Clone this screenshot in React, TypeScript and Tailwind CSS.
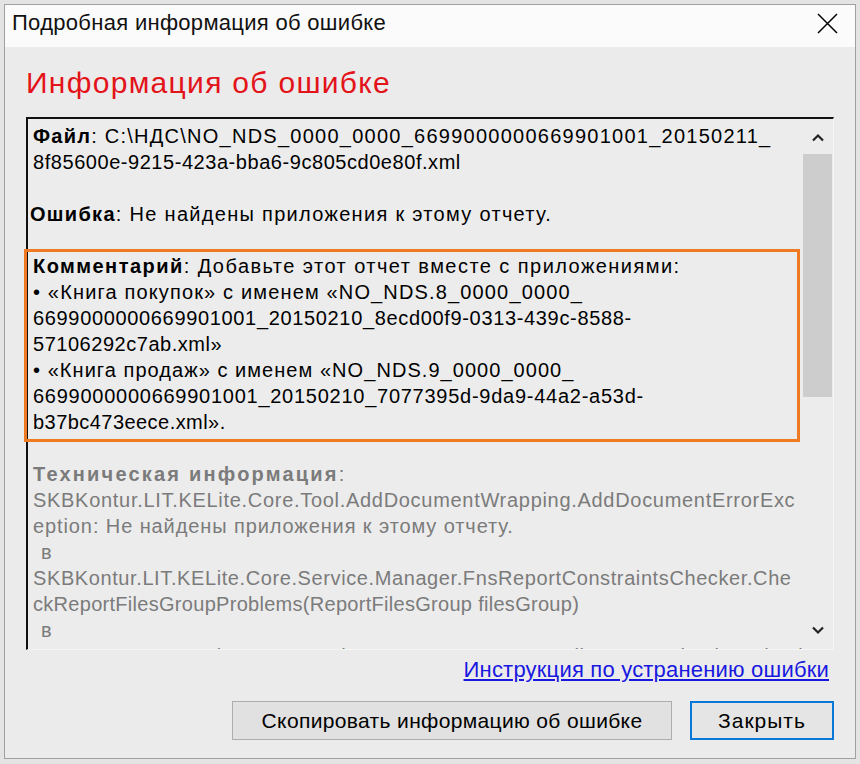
import React from 'react';

const sans = { fontFamily: '"Liberation Sans", Arial, sans-serif' };

const Line: React.FC<{ children?: React.ReactNode; className?: string }> = ({ children, className = '' }) => (
  <div className={`h-[26px] whitespace-nowrap ${className}`}>{children ?? '\u00a0'}</div>
);

const App: React.FC = () => {
  return (
    <div className="w-[860px] h-[764px] bg-[#e4e4e4] pt-[4px] pl-[4px] overflow-hidden" style={sans}>
      {/* window */}
      <div className="w-[852px] h-[755px] border border-[#a0a0a0] bg-[#ebebeb] flex flex-col">
        {/* title bar */}
        <div className="h-[42px] bg-[#fbfbfb] flex items-center justify-between pl-[7px] pr-[17px] pb-[6px]">
          <span className="text-[22px] tracking-[0.3px] text-[#111] leading-none">Подробная информация об ошибке</span>
          <svg width="21" height="21" viewBox="0 0 21 21" className="text-black">
            <path d="M1 1 L20 20 M20 1 L1 20" stroke="currentColor" strokeWidth="1.5" fill="none" />
          </svg>
        </div>

        <div className="flex flex-col px-[21px]">
          <h1 className="mt-[18px] h-[36px] leading-[36px] text-[30px] tracking-[1.3px] text-[#e3131a] whitespace-nowrap">
            Информация об ошибке
          </h1>

          {/* text box */}
          <div className="relative mt-[16px] h-[533px] border-t-2 border-l-2 border-t-[#111] border-l-[#111] border-b border-r border-b-[#f4f4f4] border-r-[#f4f4f4] bg-[#ececec] flex">
            <div className="flex-1 overflow-hidden pt-[4px] pl-[5px] text-[20px] leading-[26px] text-black">
              <Line className="tracking-[1.25px]"><b>Файл</b>: C:\НДС\NO_NDS_0000_0000_6699000000669901001_20150211_</Line>
              <Line className="tracking-[0.55px]">8f85600e-9215-423a-bba6-9c805cd0e80f.xml</Line>
              <Line />
              <Line className="-ml-[3px] tracking-[1.3px]"><b>Ошибка</b>: Не найдены приложения к этому отчету.</Line>
              <Line />
              <Line className="tracking-[1.45px]"><b>Комментарий</b>: Добавьте этот отчет вместе с приложениями:</Line>
              <Line className="tracking-[1.15px]">• «Книга покупок» с именем «NO_NDS.8_0000_0000_</Line>
              <Line className="tracking-[0.66px]">6699000000669901001_20150210_8ecd00f9-0313-439c-8588-</Line>
              <Line className="tracking-[0.53px]">57106292c7ab.xml»</Line>
              <Line className="tracking-[1.05px]">• «Книга продаж» с именем «NO_NDS.9_0000_0000_</Line>
              <Line className="tracking-[0.74px]">6699000000669901001_20150210_7077395d-9da9-44a2-a53d-</Line>
              <Line className="tracking-[0.45px]">b37bc473eece.xml».</Line>
              <Line />
              <div className="text-[#7b7b7b]">
                <Line className="tracking-[2.2px]"><b>Техническая информация</b>:</Line>
                <Line className="tracking-[0.7px]">SKBKontur.LIT.KELite.Core.Tool.AddDocumentWrapping.AddDocumentErrorExc</Line>
                <Line className="tracking-[0.9px]">eption: Не найдены приложения к этому отчету.</Line>
                <Line className="pl-[8px]">в</Line>
                <Line className="tracking-[0.6px]">SKBKontur.LIT.KELite.Core.Service.Manager.FnsReportConstraintsChecker.Che</Line>
                <Line className="tracking-[0.29px]">ckReportFilesGroupProblems(ReportFilesGroup filesGroup)</Line>
                <Line className="pl-[8px]">в</Line>
                <Line className="tracking-[0.6px]">SKBKontur.LIT.KELite.Core.Service.Manager.FnsReportFilesGroupChecker.Check</Line>
              </div>
            </div>

            {/* scrollbar */}
            <div className="w-[31px] flex flex-col items-center pt-[14px]">
              <svg width="14" height="9" viewBox="0 0 14 9">
                <path d="M2 7.5 L7 2.5 L12 7.5" stroke="#222" strokeWidth="2.2" fill="none" />
              </svg>
              <div className="mt-[12px] w-[29px] h-[243px] bg-[#cdcdcd]" />
              <div className="flex-1" />
              <svg width="14" height="9" viewBox="0 0 14 9" className="mb-[14px]">
                <path d="M2 1.5 L7 6.5 L12 1.5" stroke="#222" strokeWidth="2.2" fill="none" />
              </svg>
            </div>

            {/* highlight frame */}
            <div className="absolute left-[-4px] top-[130px] w-[776px] h-[193px] border-[3px] border-[#f07a22] pointer-events-none" />
          </div>

          <div className="mt-[8px] h-[24px] flex justify-end pr-[5px]">
            <a href="#" className="text-[22px] tracking-[0.2px] leading-[24px] text-[#1818e0] underline underline-offset-2 whitespace-nowrap">
              Инструкция по устранению ошибки
            </a>
          </div>

          <div className="mt-[19px] flex justify-end gap-[18px]">
            <button className="w-[440px] h-[39px] border border-[#adadad] bg-[#e1e1e1] text-[21px] tracking-[0.35px] text-black">
              Скопировать информацию об ошибке
            </button>
            <button className="w-[144px] h-[39px] border-2 border-[#0a78d7] bg-[#e5e5e5] text-[21px] tracking-[1px] text-black">
              Закрыть
            </button>
          </div>
        </div>
      </div>
    </div>
  );
};

export default App;
